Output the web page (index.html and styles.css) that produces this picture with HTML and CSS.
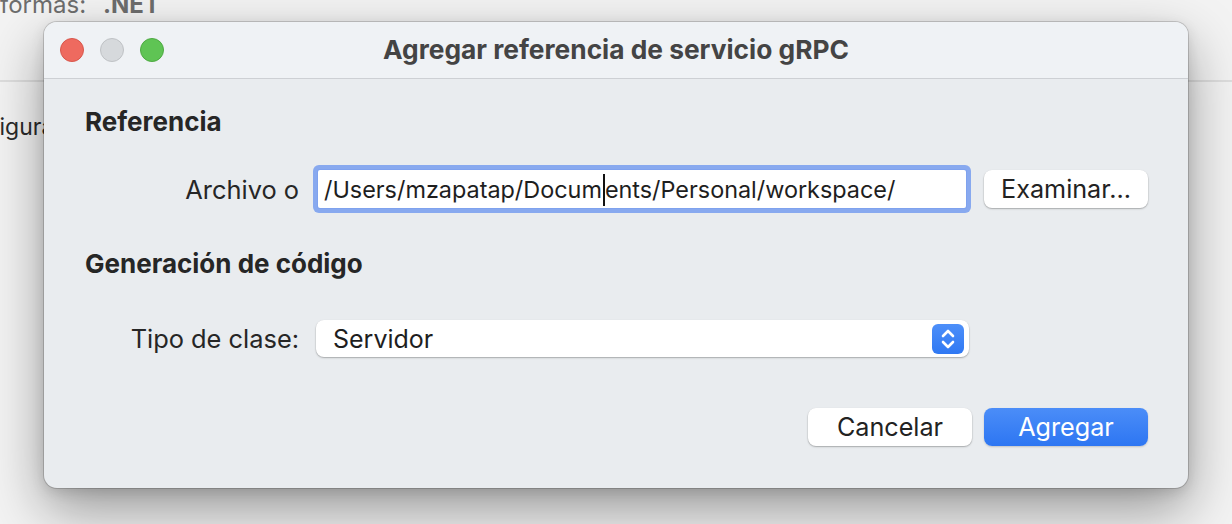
FILE: index.html
```html
<!DOCTYPE html>
<html lang="es">
<head>
<meta charset="utf-8">
<title>Agregar referencia de servicio gRPC</title>
<link rel="stylesheet" href="styles.css">
</head>
<body>
<div class="desktop">
  <div class="bg-app">
    <div class="bg-top"><span class="bg-label">formas:</span><span class="bg-value">.NET</span></div>
    <div class="bg-rule"></div>
    <div class="bg-row">figura</div>
  </div>

  <div class="window">
    <div class="titlebar">
      <div class="lights">
        <span class="light red"></span>
        <span class="light gray"></span>
        <span class="light green"></span>
      </div>
      <div class="title">Agregar referencia de servicio gRPC</div>
      <div></div>
    </div>

    <div class="content">
      <h2 class="section first">Referencia</h2>
      <div class="row">
        <label class="label">Archivo o</label>
        <div class="field"><span class="field-text">/Users/mzapatap/Docum<span class="caret"></span>ents/Personal/workspace/</span></div>
        <button class="btn">Examinar...</button>
      </div>

      <h2 class="section">Generación de código</h2>
      <div class="row row-popup">
        <label class="label">Tipo de clase:</label>
        <div class="popup">
          <span class="popup-text">Servidor</span>
          <span class="stepper">
            <svg width="32" height="30" viewBox="0 0 32 30">
              <path d="M11 12 L16 7 L21 12" fill="none" stroke="#fff" stroke-width="2.6" stroke-linecap="round" stroke-linejoin="round"/>
              <path d="M11 18 L16 23 L21 18" fill="none" stroke="#fff" stroke-width="2.6" stroke-linecap="round" stroke-linejoin="round"/>
            </svg>
          </span>
        </div>
      </div>

      <div class="actions">
        <button class="btn">Cancelar</button>
        <button class="btn primary">Agregar</button>
      </div>
    </div>
  </div>
</div>
</body>
</html>
```

FILE: styles.css
```css
* { box-sizing: border-box; }

html, body {
  margin: 0;
  padding: 0;
}

body {
  width: 1232px;
  height: 524px;
  overflow: hidden;
  background: #f3f3f3;
  font-family: Inter, "Noto Sans", "Liberation Sans", sans-serif;
  color: #262626;
}

.desktop {
  position: relative;
  width: 1232px;
  height: 524px;
  overflow: hidden;
}

/* background application behind the sheet */
.bg-app {
  display: flex;
  flex-direction: column;
}

.bg-top {
  display: flex;
  gap: 17px;
  margin-top: -10px;
  height: 90px;
  font-size: 24px;
  line-height: 30px;
  color: #6d6d6d;
}

.bg-value {
  font-weight: 700;
}

.bg-rule {
  height: 2px;
  background: #dedede;
}

.bg-row {
  margin-top: 30px;
  margin-left: -9px;
  font-size: 23px;
  line-height: 30px;
  color: #2a2a2a;
}

/* dialog window */
.window {
  position: absolute;
  left: 44px;
  top: 22px;
  width: 1144px;
  height: 466px;
  border-radius: 13px;
  background: #e9ecef;
  box-shadow:
    0 0 0 1px rgba(0, 0, 0, 0.16),
    0 22px 55px rgba(0, 0, 0, 0.38),
    0 4px 14px rgba(0, 0, 0, 0.12);
  overflow: hidden;
  display: flex;
  flex-direction: column;
}

.titlebar {
  height: 57px;
  flex: none;
  background: #eff2f5;
  border-bottom: 1px solid #cdd0d4;
  display: grid;
  grid-template-columns: 1fr auto 1fr;
  align-items: center;
}

.lights {
  display: flex;
  gap: 16px;
  padding-left: 16px;
  margin-top: -1px;
}

.light {
  width: 24px;
  height: 24px;
  border-radius: 50%;
  display: block;
}

.light.red { background: #ee6a5f; border: 1px solid #d8574c; }
.light.gray { background: #d6d9dc; border: 1px solid #bfc2c5; }
.light.green { background: #5fc454; border: 1px solid #4eaa42; }

.title {
  font-size: 26.3px;
  font-weight: 700;
  color: #444;
  margin-top: -1px;
}

.content {
  flex: 1;
  padding: 0 40px 0 41px;
  display: flex;
  flex-direction: column;
}

.section {
  margin: 40px 0 0 0;
  font-size: 26px;
  line-height: 32px;
  font-weight: 700;
  color: #262626;
}

.section.first {
  margin-top: 27px;
}

.row {
  display: grid;
  grid-template-columns: 215px 1fr auto;
  align-items: center;
  column-gap: 18px;
  margin-top: 32px;
}

.row.row-popup {
  grid-template-columns: 215px 653px;
  column-gap: 16px;
  margin-top: 40px;
}

.label {
  text-align: right;
  font-size: 25.4px;
  color: #262626;
  padding-right: 1px;
}

.field {
  height: 38px;
  background: #fff;
  border-radius: 2px;
  box-shadow: 0 0 0 1px #7fa2ee, 0 0 0 5px #88a9ef;
  display: flex;
  align-items: center;
  padding-left: 6px;
  font-size: 23.4px;
  color: #1e1e1e;
  white-space: nowrap;
  overflow: hidden;
}

.caret {
  display: inline-block;
  width: 0;
  height: 32px;
  border-left: 2px solid #111;
  vertical-align: middle;
  margin: -6px 0 -4px 1px;
}

.btn {
  height: 38px;
  width: 164px;
  border: none;
  border-radius: 8px;
  background: #fff;
  font-family: inherit;
  font-size: 25.2px;
  color: #222;
  box-shadow: 0 0.5px 0 0.5px rgba(0, 0, 0, 0.08), 0 1px 2px rgba(0, 0, 0, 0.22);
  padding: 0;
}

.popup {
  height: 37px;
  background: #fff;
  border-radius: 8px;
  box-shadow: 0 0.5px 0 0.5px rgba(0, 0, 0, 0.08), 0 1px 2px rgba(0, 0, 0, 0.22);
  display: flex;
  align-items: center;
  justify-content: space-between;
  padding: 0 5px 0 17px;
  font-size: 25px;
  color: #1e1e1e;
}

.stepper {
  width: 32px;
  height: 30px;
  border-radius: 6px;
  background: linear-gradient(#4d8ff9, #2f78f3);
  display: flex;
}

.actions {
  margin-top: 51px;
  display: flex;
  justify-content: flex-end;
  gap: 12px;
}

.btn.primary {
  background: linear-gradient(#4b8df8, #2d76f2);
  color: #fff;
  box-shadow: 0 1px 2px rgba(0, 0, 0, 0.18);
}
```
